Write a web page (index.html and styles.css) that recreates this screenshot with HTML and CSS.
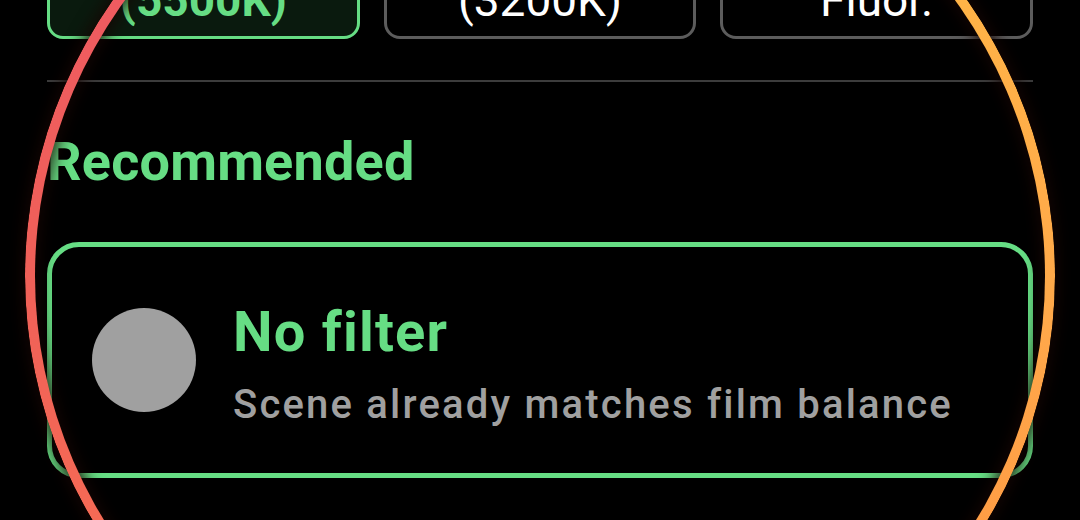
FILE: index.html
```html
<!DOCTYPE html>
<html lang="en">
<head>
<meta charset="utf-8">
<title>Filter</title>
<link rel="stylesheet" href="styles.css">
</head>
<body>
<main class="screen">
  <div class="chips">
    <button class="chip chip-selected">(5500K)</button>
    <button class="chip">(3200K)</button>
    <button class="chip">Fluor.</button>
  </div>
  <hr class="divider">
  <h2 class="section-title">Recommended</h2>
  <div class="card">
    <span class="swatch"></span>
    <div class="card-text">
      <div class="card-title">No filter</div>
      <div class="card-sub">Scene already matches film balance</div>
    </div>
  </div>
</main>
<div class="ring-glow"></div>
<div class="ring"></div>
</body>
</html>
```

FILE: styles.css
```css
html, body {
  margin: 0;
  padding: 0;
  background: #000;
  width: 1080px;
  height: 520px;
  overflow: hidden;
  font-family: Roboto, "Noto Sans", "Liberation Sans", sans-serif;
}

.screen {
  padding: 0 47px;
}

.chips {
  display: grid;
  grid-template-columns: repeat(3, 1fr);
  gap: 24px;
  margin-top: -39px;
}

.chip {
  box-sizing: border-box;
  height: 78px;
  padding: 9px;
  border: 3px solid #5c5c5c;
  border-radius: 16px;
  background: #000;
  color: #fff;
  font-family: inherit;
  font-size: 46px;
  line-height: 54px;
  font-weight: 400;
  text-align: center;
}

.chip-selected {
  border-color: #66dd84;
  background: #0a1a0e;
  color: #66dd84;
  font-weight: 700;
}

.divider {
  margin: 41px 0 0;
  height: 2px;
  border: 0;
  background: #3c3c3c;
}

.section-title {
  margin: 48px 0 0;
  font-size: 54px;
  line-height: 64px;
  font-weight: 700;
  letter-spacing: 0.2px;
  color: #66dd84;
}

.card {
  box-sizing: border-box;
  height: 236px;
  margin-top: 48px;
  border: 5px solid #66dd84;
  border-radius: 32px;
  padding: 0 40px;
  display: flex;
  align-items: center;
}

.swatch {
  flex: none;
  width: 104px;
  height: 104px;
  border-radius: 50%;
  background: #a0a0a0;
  margin-right: 37px;
}

.card-text {
  margin-top: 8px;
}

.card-title {
  font-size: 56px;
  line-height: 66px;
  font-weight: 700;
  letter-spacing: 1.2px;
  color: #66dd84;
}

.card-sub {
  margin-top: 16px;
  font-size: 40px;
  line-height: 48px;
  font-weight: 500;
  letter-spacing: 2.2px;
  color: #a0a0a0;
}

.ring,
.ring-glow {
  position: fixed;
  left: 25px;
  top: -218px;
  width: 1030px;
  height: 988px;
  box-sizing: border-box;
  border-radius: 50%;
  pointer-events: none;
}

.ring-glow {
  left: 30px;
  top: -213px;
  width: 1020px;
  height: 978px;
  box-shadow: 0 0 16px 8px rgba(22, 6, 3, 0.9), inset 0 0 16px 8px rgba(22, 6, 3, 0.9);
}

.ring {
  border: 10px solid transparent;
  background: conic-gradient(from 0deg at 50% 50%,
    #ffc04c 0deg, #ffb347 57deg, #ffa84a 95deg, #ff9d45 120deg,
    #fa8249 180deg, #f56a55 241deg, #f06058 270deg, #ef5b60 303deg, #ee5668 360deg) border-box;
  -webkit-mask: linear-gradient(#000 0 0) padding-box, linear-gradient(#000 0 0) border-box;
  -webkit-mask-composite: xor;
  mask: linear-gradient(#000 0 0) padding-box exclude, linear-gradient(#000 0 0) border-box;
}
```
